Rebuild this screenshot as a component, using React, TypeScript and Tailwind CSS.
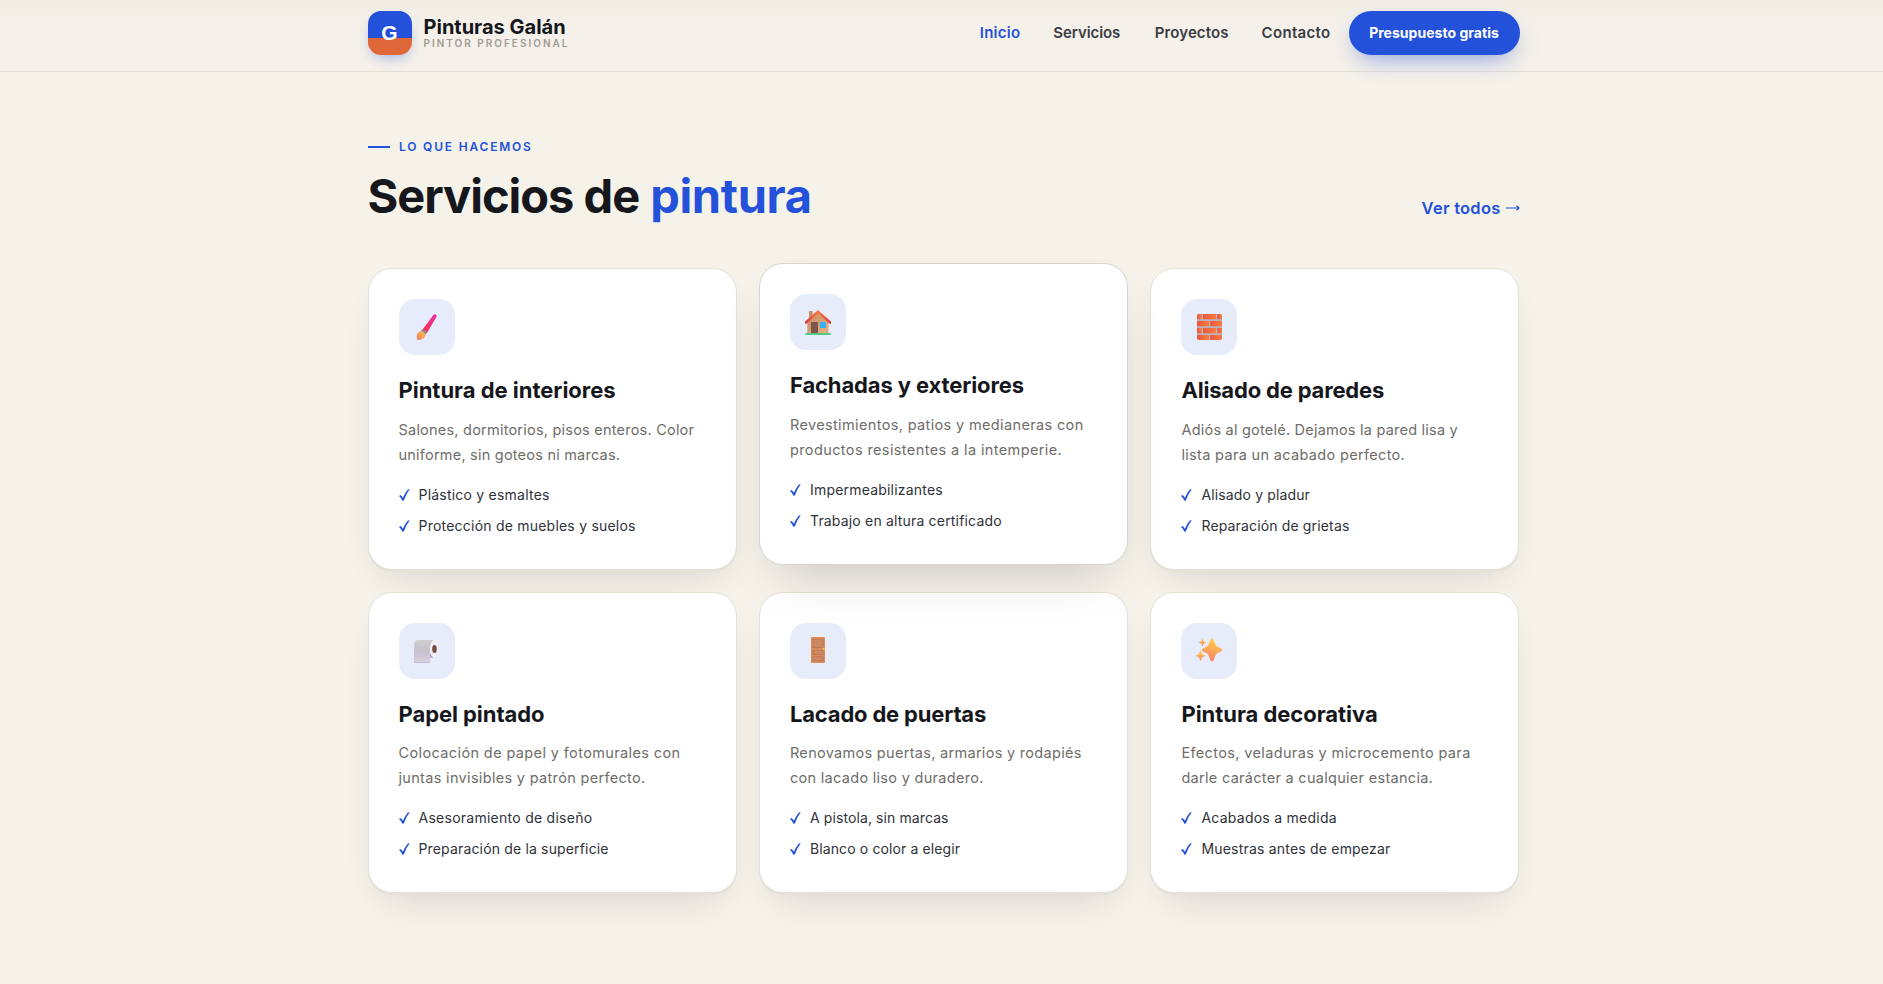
import type { ReactNode } from 'react';
import clsx from 'clsx';

// [text, letter spacing class]
type Line = [string, string];

interface Service {
  icon: ReactNode;
  title: Line;
  description: Line[];
  features: Line[];
  active?: boolean;
}

function BrushIcon() {
  return (
    <svg viewBox="0 0 56 56" className="size-14">
      <defs>
        <linearGradient id="brush-handle" x1="1" y1="0" x2="0" y2="1">
          <stop offset="0" stopColor="#f02ba8" />
          <stop offset="1" stopColor="#fb3048" />
        </linearGradient>
        <linearGradient id="brush-hair" x1="1" y1="0" x2="0" y2="1">
          <stop offset="0" stopColor="#ffc34f" />
          <stop offset="1" stopColor="#f47b5c" />
        </linearGradient>
      </defs>
      <path d="M34.4 15.900c1-1.300 4-.4 3.100 1.900L28.200 33.400l-4.600-2.800z" fill="url(#brush-handle)" />
      <path d="m23.700 30.200 4.600 3-1.600 2.200-5-3.400z" fill="#8d8795" />
      <path d="M21.800 32.200c2.400.4 4.200 1.700 4.600 3.400.2 3.100-3.300 5.900-8.200 5.200.3-1-.7-2-.4-4 .3-2.200 1.500-4.300 4-4.600z" fill="url(#brush-hair)" />
    </svg>
  );
}

function HouseIcon() {
  return (
    <svg viewBox="0 0 56 56" className="size-14">
      <defs>
        <linearGradient id="house-wall" x1="0" y1="0" x2="1" y2="1">
          <stop offset="0" stopColor="#c98a5c" />
          <stop offset="1" stopColor="#e3b285" />
        </linearGradient>
        <linearGradient id="house-roof" x1="0" y1="0" x2="0" y2="1">
          <stop offset="0" stopColor="#ff8049" />
          <stop offset="1" stopColor="#d9363f" />
        </linearGradient>
      </defs>
      <path d="M19 17h3.600v9H19z" fill="#c39062" />
      <path d="M17.300 27 28 17.500 38.500 27v12H17.300z" fill="url(#house-wall)" />
      <path d="M21 28h7v11h-7z" fill="#7d5650" />
      <path d="M30 28h6v6h-6z" fill="#35b0f8" />
      <path d="M28 15.900 41 27.500v2L39.900 30 28 19.300 16.200 30 15 29.500v-2z" fill="url(#house-roof)" />
      <path d="M15.700 38.900h24.600l.7 2.100H15z" fill="#4fcb80" />
    </svg>
  );
}

function BrickIcon() {
  return (
    <svg viewBox="0 0 56 56" className="size-14">
      <defs>
        <linearGradient id="brick" x1="0" y1="0" x2="1" y2="0">
          <stop offset="0" stopColor="#e9553f" />
          <stop offset="1" stopColor="#fb7c3d" />
        </linearGradient>
      </defs>
      <rect x="16" y="15" width="25" height="26" rx="2" fill="#b9b2bf" />
      <g fill="url(#brick)">
        <path d="M18 15h2.800v5.200H16V17q0-2 2-2z" />
        <path d="M22 15h13v5.200H22z" />
        <path d="M36.200 15H39q2 0 2 2v3.200h-4.800z" />
        <path d="M16 22h12v5.200H16z" />
        <path d="M29.200 22H41v5.200H29.200z" />
        <path d="M16 29h4.800v5.200H16z" />
        <path d="M22 29h13v5.200H22z" />
        <path d="M36.200 29H41v5.200h-4.800z" />
        <path d="M16 36h12v5H18q-2 0-2-2z" />
        <path d="M29.200 36H41v3q0 2-2 2h-9.800z" />
      </g>
    </svg>
  );
}

function PaperRollIcon() {
  return (
    <svg viewBox="0 0 56 56" className="size-14">
      <defs>
        <linearGradient id="roll-sheet" x1="0" y1="0" x2="0" y2="1">
          <stop offset="0" stopColor="#cfcdcb" />
          <stop offset=".5" stopColor="#c6c1cd" />
          <stop offset="1" stopColor="#d8d2de" />
        </linearGradient>
      </defs>
      <path d="M30 31h4v3.700h-4z" fill="#b79bd0" />
      <path d="M19 17h16.500L31 24v16H15V22.500Q15 17.500 19 17z" fill="url(#roll-sheet)" />
      <path d="M15 39.300h16v.7H15z" fill="#c3addd" />
      <ellipse cx="35.400" cy="26" rx="4.400" ry="9" fill="#f1eff3" />
      <ellipse cx="35.500" cy="26" rx="2.300" ry="3.900" fill="#7b4a3e" />
    </svg>
  );
}

function DoorIcon() {
  return (
    <svg viewBox="0 0 56 56" className="size-14">
      <rect x="21" y="14" width="14" height="26" rx=".8" fill="#db8c5a" />
      <g fill="#cb8863" stroke="#bb7350" strokeWidth=".7">
        <path d="M22.800 16.200h10.400v8.400H22.800z" />
        <path d="M22.800 27.500h10.400v4H22.800z" />
        <path d="M22.800 33.600h10.400v4.400H22.800z" />
      </g>
      <circle cx="33.600" cy="25.800" r="1" fill="#ffc93a" />
    </svg>
  );
}

function SparklesIcon() {
  return (
    <svg viewBox="0 0 56 56" className="size-14">
      <defs>
        <linearGradient id="sparkle" x1=".6" y1="0" x2=".35" y2="1">
          <stop offset="0" stopColor="#ffd047" />
          <stop offset="1" stopColor="#fa8068" />
        </linearGradient>
      </defs>
      <g fill="url(#sparkle)">
        <path d="M29.600 16.600q1.400-2.200 2.800 0l2.200 5.200q.5 1.200 1.700 1.700l4 2.100q1.600 1.400 0 2.800l-4 1.900q-1.200.5-1.700 1.700l-2.200 5.500q-1.400 1.700-2.800 0l-2.200-5.500q-.5-1.200-1.700-1.700l-4-1.900q-1.600-1.400 0-2.800l4-2.100q1.200-.5 1.700-1.700z" />
        <path d="m21.500 15.500 1.200 2.700 2.600 1.300-2.600 1.300-1.200 2.700-1.200-2.700-2.600-1.300 2.600-1.300z" />
        <path d="m19.400 27.300 1.600 3.800 3.500 1.700-3.500 1.700-1.400 3.800-1.600-3.800-3.300-1.700 3.300-1.700z" />
      </g>
    </svg>
  );
}

function CheckIcon() {
  return (
    <svg viewBox="0 0 11 12" className="h-3 w-[11px] shrink-0">
      <path d="M0 6.900 1.400 6q1.700 1.100 2.500 2.700Q5.900 4 8.900.6L10.800.3Q6.900 5 4.800 11.500L3.400 11.700Q2.200 8.500 0 6.900z" fill="#2451d9" />
    </svg>
  );
}

const SERVICES: Service[] = [
  {
    icon: <BrushIcon />,
    title: ['Pintura de interiores', 'tracking-[-0.02px]'],
    description: [
      ['Salones, dormitorios, pisos enteros. Color', 'tracking-[0.22px]'],
      ['uniforme, sin goteos ni marcas.', 'tracking-[0.22px]'],
    ],
    features: [
      ['Plástico y esmaltes', 'tracking-[0.22px]'],
      ['Protección de muebles y suelos', 'tracking-[0.22px]'],
    ],
  },
  {
    icon: <HouseIcon />,
    title: ['Fachadas y exteriores', 'tracking-[-0.12px]'],
    description: [
      ['Revestimientos, patios y medianeras con', 'tracking-[0.36px]'],
      ['productos resistentes a la intemperie.', 'tracking-[0.39px]'],
    ],
    features: [
      ['Impermeabilizantes', 'tracking-[0.2px]'],
      ['Trabajo en altura certificado', 'tracking-[0.18px]'],
    ],
    active: true,
  },
  {
    icon: <BrickIcon />,
    title: ['Alisado de paredes', 'tracking-[-0.18px]'],
    description: [
      ['Adiós al gotelé. Dejamos la pared lisa y', 'tracking-[0.22px]'],
      ['lista para un acabado perfecto.', 'tracking-[0.33px]'],
    ],
    features: [
      ['Alisado y pladur', 'tracking-[0.14px]'],
      ['Reparación de grietas', 'tracking-[0.15px]'],
    ],
  },
  {
    icon: <PaperRollIcon />,
    title: ['Papel pintado', 'tracking-[-0.06px]'],
    description: [
      ['Colocación de papel y fotomurales con', 'tracking-[0.38px]'],
      ['juntas invisibles y patrón perfecto.', 'tracking-[0.32px]'],
    ],
    features: [
      ['Asesoramiento de diseño', 'tracking-[0.26px]'],
      ['Preparación de la superficie', 'tracking-[0.16px]'],
    ],
  },
  {
    icon: <DoorIcon />,
    title: ['Lacado de puertas', 'tracking-[-0.18px]'],
    description: [
      ['Renovamos puertas, armarios y rodapiés', 'tracking-[0.3px]'],
      ['con lacado liso y duradero.', 'tracking-[0.3px]'],
    ],
    features: [
      ['A pistola, sin marcas', 'tracking-[0.1px]'],
      ['Blanco o color a elegir', 'tracking-[0.12px]'],
    ],
  },
  {
    icon: <SparklesIcon />,
    title: ['Pintura decorativa', 'tracking-[-0.04px]'],
    description: [
      ['Efectos, veladuras y microcemento para', 'tracking-[0.36px]'],
      ['darle carácter a cualquier estancia.', 'tracking-[0.29px]'],
    ],
    features: [
      ['Acabados a medida', 'tracking-[0.25px]'],
      ['Muestras antes de empezar', 'tracking-[0.2px]'],
    ],
  },
];

const NAV: Line[] = [
  ['Inicio', 'tracking-[0.26px] text-[#2451d9]'],
  ['Servicios', 'mr-[1.5px] tracking-[-0.08px] text-[#3a3c42]'],
  ['Proyectos', 'tracking-[0.11px] text-[#3a3c42]'],
  ['Contacto', 'tracking-[0.32px] text-[#3a3c42]'],
];

function Header() {
  return (
    <header className="h-[72px] border-b border-[#e3dfd6] bg-linear-to-b from-[#f1ede5] to-[#f5f1ea] to-35% pt-[11px]">
      <div className="mx-auto flex h-11 w-[1152px] translate-x-[2px] items-center justify-between">
        <a href="#" className="flex items-center gap-3">
          <span className="flex size-11 items-center justify-center rounded-[13px] bg-linear-to-b from-[#2451d9] from-62% to-[#e0673a] to-62% font-['Liberation_Sans'] text-[21px] font-bold text-white shadow-[0_6px_14px_-4px_rgba(36,81,217,0.4)]">
            G
          </span>
          <span className="flex flex-col pt-px">
            <span className="text-xl leading-[20px] font-bold text-[#15171c]">Pinturas Galán</span>
            <span className="text-[10px] leading-[13px] font-semibold tracking-[2px] text-[#a09c93]">PINTOR PROFESIONAL</span>
          </span>
        </a>
        <nav className="flex items-center text-[15px] font-semibold">
          <div className="flex gap-[33px]">
            {NAV.map(([label, style]) => (
              <a key={label} href="#" className={style}>{label}</a>
            ))}
          </div>
          <a
            href="#"
            className="ml-[18px] flex h-11 w-[171px] items-center justify-center rounded-full bg-[#2451d9] text-sm font-bold tracking-[0.03px] text-white shadow-[0_10px_24px_-8px_rgba(36,81,217,0.55)]"
          >
            Presupuesto gratis
          </a>
        </nav>
      </div>
    </header>
  );
}

function ServiceCard({ icon, title, description, features, active }: Service) {
  return (
    <article
      className={clsx(
        'h-[301.3px] rounded-[24px] border bg-white px-[30px] pt-[30px]',
        active
          ? 'z-10 -translate-y-[5px] border-[#d9d5c8] shadow-[0_24px_50px_-24px_rgba(21,23,28,0.26)]'
          : 'border-[#e5e1d6] shadow-[0_2px_0_#e5e1d6,0_18px_40px_-20px_rgba(21,23,28,0.2)]'
      )}
    >
      <div className="size-14 overflow-hidden rounded-2xl bg-[#e6ecfa]">{icon}</div>
      <h3 className={clsx('mt-[22px] text-[22px] leading-[26px] font-bold whitespace-nowrap text-[#15171c]', title[1])}>
        {title[0]}
      </h3>
      <p className="mt-[13.5px] text-[14.5px] leading-[25px] whitespace-nowrap text-[#6e6d69]">
        {description.map(([text, tracking]) => (
          <span key={text} className={clsx('block', tracking)}>{text}</span>
        ))}
      </p>
      <ul className="mt-[17px] flex flex-col gap-[9px] text-sm leading-[22px] text-[#2f3239]">
        {features.map(([text, tracking]) => (
          <li key={text} className="flex items-center gap-[9px] whitespace-nowrap">
            <CheckIcon />
            <span className={tracking}>{text}</span>
          </li>
        ))}
      </ul>
    </article>
  );
}

export default function App() {
  return (
    <div className="h-[984px] overflow-hidden bg-[#f5f2ea] font-[Inter,'Liberation_Sans',sans-serif]">
      <Header />
      <main className="mx-auto w-[1152px] translate-x-[2px] pt-[67px]">
        <div className="flex items-center gap-[9.5px]">
          <span className="h-0.5 w-[22px] bg-[#2451d9]" />
          <span className="text-xs leading-4 font-semibold tracking-[1.8px] text-[#2451d9]">LO QUE HACEMOS</span>
        </div>
        <div className="mt-[15px] flex items-end justify-between">
          <h2 className="flex gap-[11px] text-[47px] leading-[52px] font-bold text-[#15171c]">
            <span className="tracking-[-1.02px]">Servicios de</span>
            <span className="tracking-[-0.32px] text-[#2451d9]">pintura</span>
          </h2>
          <a href="#" className="flex items-center gap-[5px] pb-0.5 text-[16.5px] leading-6 font-semibold text-[#2451d9]">
            <span className="tracking-[0.25px]">Ver todos</span>
            <svg viewBox="0 0 14 8" className="h-2 w-[14px]" fill="none" stroke="currentColor" strokeWidth="1.2">
              <path d="M0 4h13M10.500 1.800l2.500 2.200-2.500 2.200" />
            </svg>
          </a>
        </div>
        <div className="mt-[46.3px] grid grid-cols-3 gap-[22.4px]">
          {SERVICES.map(service => (
            <ServiceCard key={service.title[0]} {...service} />
          ))}
        </div>
      </main>
    </div>
  );
}
